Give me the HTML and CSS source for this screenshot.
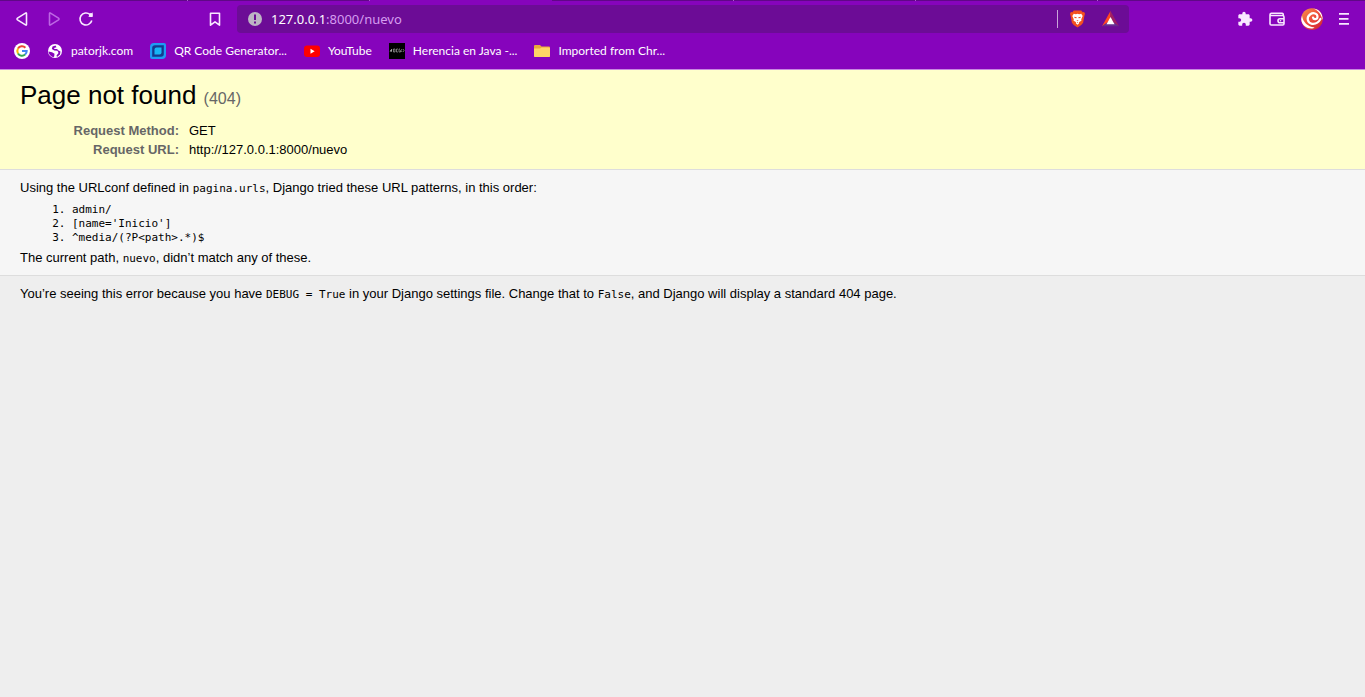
FILE: index.html
```html
<!DOCTYPE html>
<html lang="en">
<head>
<meta charset="utf-8">
<title>Page not found at /nuevo</title>
<link rel="stylesheet" href="styles.css">
</head>
<body>
<header class="browser">
  <div class="tabs"><i></i><i></i><i class="active"></i><i></i><i></i><i></i><i class="rest"></i></div>
  <div class="toolbar">
    <nav class="nav" aria-label="Navigation">
      <button class="tool" aria-label="Back"><svg width="16" height="16" viewBox="0 0 16 16"><path class="line" d="M12.500 2.500v11q0 1-1 .4L3.500 8.800q-1-.8 0-1.600l8-5.100q1-.6 1 .4z"/></svg></button>
      <button class="tool dim" aria-label="Forward"><svg width="16" height="16" viewBox="0 0 16 16"><path class="line" d="M3.500 2.500v11q0 1 1 .4l8-5.100q1-.8 0-1.600l-8-5.100q-1-.6-1 .4z"/></svg></button>
      <button class="tool" aria-label="Reload"><svg width="16" height="16" viewBox="0 0 16 16"><path class="line" d="M13.800 9.500A6 6 0 1 1 12 3.500"/><path class="fill" d="M10.200 5.800 14.600 6V1.200z"/><circle class="fill" cx="12.800" cy="4" r="1.900"/></svg></button>
      <button class="tool mark" aria-label="Bookmark"><svg width="16" height="16" viewBox="0 0 16 16"><path class="line" d="M3.500 2.200h9v12L8 10.800l-4.500 3.400z"/></svg></button>
    </nav>
    <div class="address">
      <svg class="info-icon" width="14" height="14" viewBox="0 0 14 14"><circle cx="7" cy="7" r="7" fill="#bdb5c4"/><path d="M6 2.500h2v5.500H6zM6 9.500h2v2H6z" fill="#6c0c96"/></svg>
      <span class="url"><b>127.0.0.1</b>:8000/nuevo</span>
      <button class="tool shield" aria-label="Shields"><svg width="15" height="18" viewBox="0 0 16 18"><path d="M4 0h8l1.500 1.700L15 1.500l1 2-.7 2.200L14 13l-2 2.500L8 18l-4-2.500L2 13 .7 5.700 0 3.500l1-2 1.500.2z" fill="#f4511e"/><path d="m4 3.500 2.300.3L8 3.300l1.700.5 2.300-.3 1.500 2.200-1.500 3.500.2 1.600-2.400 1.500-.3 1.500L8 15l-1.500-1.200-.3-1.500-2.400-1.500.2-1.600-1.500-3.500z" fill="#fff"/><path d="m4.500 6.500 2.700.7-.4 1.100-1.900-.5zM11.500 6.500l-2.700.7.4 1.100 1.900-.5zM6.800 10.300h2.400L8 11.300zM7.200 12.600l.8-.5.8.5-.8.700z" fill="#ef4a22"/></svg></button>
      <button class="tool" aria-label="Rewards"><svg width="17" height="16" viewBox="0 0 17 16"><path d="M8.500 0 0 15.200l8.500-5.700z" fill="#ff4724"/><path d="M8.500 0 17 15.200 8.500 9.500z" fill="#9e1f63"/><path d="M0 15.200h17l-5-3.400H5z" fill="#662d91"/><path d="m8.500 6-4 7.200h8z" fill="#fff"/></svg></button>
    </div>
    <div class="extras">
      <button class="tool" aria-label="Extensions"><svg width="16" height="16" viewBox="0 0 24 24"><path class="fill" d="M20.500 11H19V7c0-1.100-.9-2-2-2h-4V3.500C13 2.100 11.900 1 10.500 1S8 2.100 8 3.500V5H4c-1.100 0-2 .9-2 2v3.800h1.500c1.500 0 2.700 1.200 2.700 2.700s-1.200 2.700-2.700 2.700H2V20c0 1.100.9 2 2 2h3.800v-1.500c0-1.500 1.200-2.700 2.700-2.700s2.700 1.200 2.700 2.700V22H17c1.100 0 2-.9 2-2v-4h1.500c1.400 0 2.500-1.100 2.500-2.500S21.900 11 20.500 11z"/></svg></button>
      <button class="tool" aria-label="Wallet"><svg width="18" height="16" viewBox="0 0 18 16"><path class="line" d="M15.200 4.500v-1.300q0-1-1-1H3.500q-1.500 0-1.500 1.500v9q0 1.300 1.300 1.300h11.400q1.300 0 1.300-1.300V6q0-1.500-1.500-1.500h-11Q2 4.500 2 3.500M16 7.700h-4a2 2 0 0 0 0 4h4"/><circle class="fill" cx="12.500" cy="9.700" r=".8"/></svg></button>
      <button class="tool" aria-label="Profile"><svg width="22" height="22" viewBox="0 0 22 22"><defs><linearGradient id="swirl" x1="0" y1="0" x2="1" y2="1"><stop offset="0" stop-color="#f79a4b"/><stop offset=".5" stop-color="#ef4d3a"/><stop offset="1" stop-color="#c91f35"/></linearGradient></defs><circle cx="11" cy="11" r="10.800" fill="url(#swirl)"/><path d="M12 9.500c.5 2.500 4.500 2 4.500-.8C16.500 5.500 12.500 4 9 6.500c-4 3-2.500 8.500 2 9.300 3.500.5 6.500-1.300 8.500-4.800" fill="none" stroke="#fff" stroke-width="2.200" stroke-linecap="round"/><path d="M12 .4C18 1 22 5 21.600 12 20 6 17.500 2.500 12 .4zM1 7.500C2 14.500 6.500 18.500 13.500 19.500 11 22 .5 20 .2 11z" fill="#fff"/></svg></button>
      <button class="tool" aria-label="Menu"><svg width="12" height="14" viewBox="0 0 12 14"><path class="fill" d="M1 1h10v1.800H1zM1 6h9.500v1.800H1zM1 11h10v1.800H1z"/></svg></button>
    </div>
  </div>
  <nav class="bookmarks" aria-label="Bookmarks">
    <a href="#" aria-label="Google"><svg width="16" height="16" viewBox="0 0 16 16"><circle cx="8" cy="8" r="8" fill="#fff"/><g fill="none" stroke-width="2"><path d="M11.400 4.700A4.700 4.700 0 0 0 4 5.600" stroke="#ea4335"/><path d="M4 5.600a4.700 4.700 0 0 0 0 4.800" stroke="#fbbc05"/><path d="M4 10.400a4.700 4.700 0 0 0 7.100 1.200" stroke="#34a853"/><path d="M11.100 11.600A4.700 4.700 0 0 0 12.700 8H8" stroke="#4285f4"/></g></svg></a>
    <a href="#"><svg width="16" height="16" viewBox="0 0 16 16"><circle cx="8" cy="8" r="7" fill="#fff"/><path d="M8.500 2.500 5.500 3.600 4.800 6l2.500 1.500 3.200.3 1 2.200-2 2.500.5 1.500 3-2.500.5-3-2-1-1.500-1.500H7.500L7 5l2.500-.8zM1.500 8.500l3.500.7 2.500 1.500-.3 2.800-1 .8Q2 12.700 1.500 8.500z" fill="#8604bc"/></svg>patorjk.com</a>
    <a href="#"><svg width="16" height="16" viewBox="0 0 16 16"><path d="M4 0h10q2 0 2 2v10q0 4-4 4H2q-2 0-2-2V4q0-4 4-4z" fill="#1e9bf4"/><path d="M5 2.200h8.800V11q0 2.800-2.800 2.800H2.200V5q0-2.800 2.800-2.800z" fill="#13388e"/><path d="M6.500 4.500h5v5q0 2-2 2h-5v-5q0-2 2-2z" fill="#16b5f5"/></svg>QR Code Generator...</a>
    <a href="#"><svg width="16" height="16" viewBox="0 0 16 16"><rect y="2.500" width="16" height="11.500" rx="3" fill="#f00"/><path d="M6.500 5.700v5l4.200-2.500z" fill="#fff"/></svg>YouTube</a>
    <a href="#"><svg width="16" height="16" viewBox="0 0 16 16"><path d="M0 0h16v16H0z"/><path d="M1 7.500h2M2.500 6v3M1 9l2-3M4.500 6v3h1.500V6zM9 6H7.500v3H9M11 6h-1v3h1.500V7.500M13 6l-1 1.500 1 1.500M14 6l1 1.500L14 9" fill="none" stroke="#bbb" stroke-width=".6"/></svg>Herencia en Java -...</a>
    <a href="#"><svg width="16" height="16" viewBox="0 0 16 16"><path d="M0 3q0-1 1-1h5l1.500 1.500H15q1 0 1 1V13q0 1-1 1H1q-1 0-1-1z" fill="#e9a93a"/><path d="M0 5.500h6l1.500-1H15q1 0 1 1V13q0 1-1 1H1q-1 0-1-1z" fill="#ffd466"/></svg>Imported from Chr...</a>
  </nav>
</header>
<main>
  <section class="summary">
    <h1>Page not found <span>(404)</span></h1>
    <table class="meta">
      <tr><th scope="row">Request Method:</th><td>GET</td></tr>
      <tr><th scope="row">Request URL:</th><td>http://127.0.0.1:8000/nuevo</td></tr>
    </table>
  </section>
  <section class="info">
    <p>Using the URLconf defined in <code>pagina.urls</code>, Django tried these URL patterns, in this order:</p>
    <ol>
      <li>admin/</li>
      <li>[name='Inicio']</li>
      <li>^media/(?P&lt;path&gt;.*)$</li>
    </ol>
    <p>The current path, <code>nuevo</code>, didn’t match any of these.</p>
  </section>
  <section class="explanation">
    <p>You’re seeing this error because you have <code>DEBUG = True</code> in your Django settings file. Change that to <code>False</code>, and Django will display a standard 404 page.</p>
  </section>
</main>
</body>
</html>
```
FILE: styles.css
```css
* { box-sizing: border-box; }
body {
  margin: 0;
  background: #eee;
  color: #000;
  font: 13px/15px "Liberation Sans", Arial, sans-serif;
}

/* Browser chrome */
.browser {
  height: 70px;
  background: #8604bc;
  border-bottom: 1px solid #c88ae0;
  font-family: "Noto Sans", "Open Sans", sans-serif;
}
.tabs { display: flex; height: 1px; padding-left: 6px; background: #5f0887; }
.tabs i { width: 182px; border-right: 1px solid #a95bcb; }
.tabs .active { background: #8604bc; border: 0; }
.tabs .rest { flex: 1; border: 0; }
.toolbar { display: flex; align-items: center; height: 36px; }
.tool {
  display: flex;
  padding: 0;
  border: 0;
  background: none;
  color: #f8e8ff;
}
.dim { color: #bd66e4; }
.line { fill: none; stroke: currentColor; stroke-width: 1.6; stroke-linejoin: round; }
.fill { fill: currentColor; }
.nav {
  display: flex;
  align-items: center;
  gap: 16px;
  width: 237px;
  padding: 0 14px;
}
.mark { margin-left: auto; }
.address {
  display: flex;
  flex: 1;
  align-items: center;
  gap: 17px;
  height: 28px;
  padding: 0 10px 0 11px;
  border-radius: 4px;
  background: #6c0c96;
}
.url {
  flex: 1;
  margin-left: -8px;
  color: #d59df0;
  font-size: 13px;
  line-height: 20px;
}
.url b { color: #fff; font-weight: 400; }
.shield { padding-left: 12px; border-left: 1px solid #c9a5d9; }
.extras {
  display: flex;
  align-items: center;
  justify-content: flex-end;
  gap: 15px;
  width: 236px;
  padding-right: 15px;
}
.bookmarks {
  display: flex;
  align-items: center;
  gap: 17px;
  height: 28px;
  padding-left: 14px;
}
.bookmarks a {
  display: flex;
  align-items: center;
  gap: 8px;
  color: #fff;
  font: 12px/16px Lato, "Open Sans", sans-serif;
  text-decoration: none;
  white-space: nowrap;
}

/* Error page */
h1, p, ol { margin: 0; }
.summary {
  padding: 10px 20px;
  border-bottom: 1px solid #ddd;
  background: #ffc;
}
h1 { margin-bottom: 7px; font-size: 26px; font-weight: 400; line-height: 30px; }
h1 span { color: #666; font-size: 16px; }
.meta { border-collapse: collapse; }
.meta th, .meta td { padding: 2px 3px; vertical-align: top; text-align: left; }
.meta th { width: 166px; padding-right: 7px; color: #666; text-align: right; }
.info {
  padding: 10px 20px;
  border-bottom: 1px solid #ddd;
  background: #f6f6f6;
}
.explanation { padding: 10px 20px; }
code, ol { font-family: "DejaVu Sans Mono", monospace; font-size: 11px; }
code { line-height: 11px; }
ol { margin: 8px 0 5px; padding-left: 52px; line-height: 14px; }
```
